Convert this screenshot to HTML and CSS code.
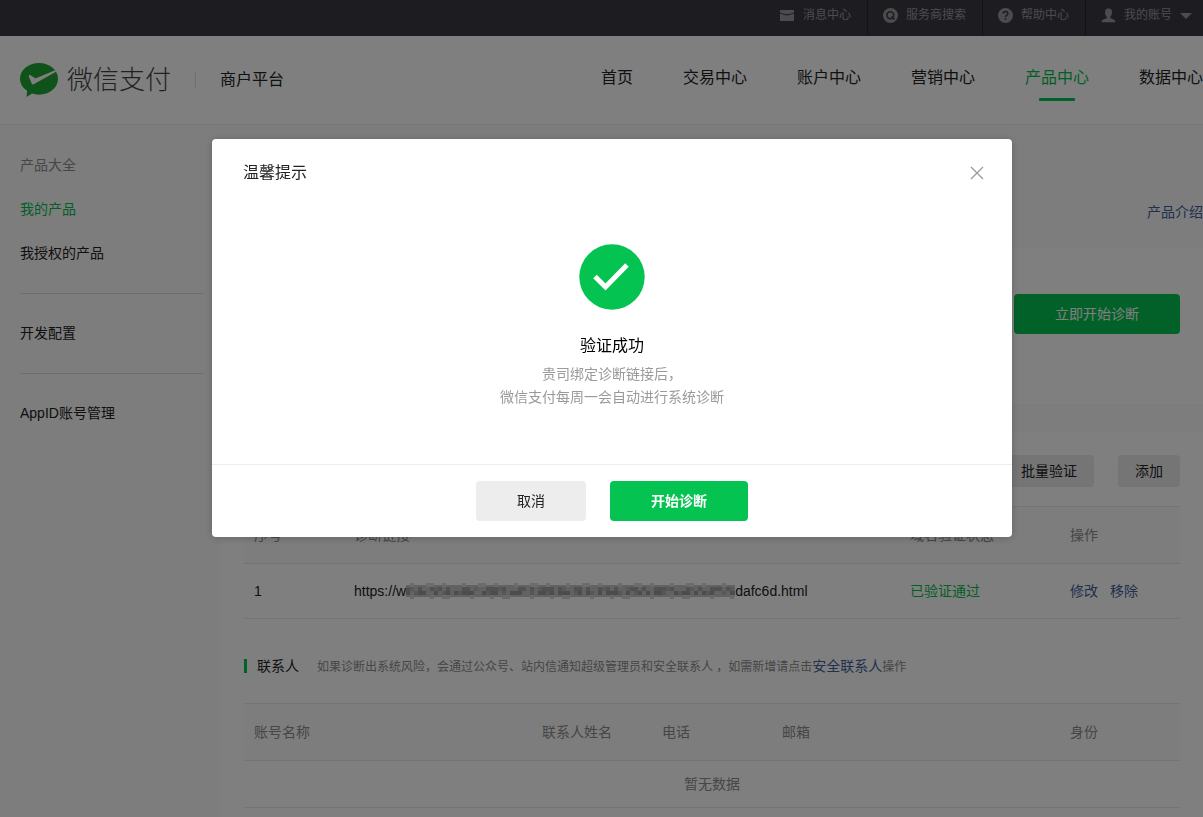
FILE: index.html
```html
<!DOCTYPE html>
<html lang="zh-CN">
<head>
  <meta charset="UTF-8" />
  <meta name="viewport" content="width=device-width, initial-scale=1" />
  <title>微信支付商户平台</title>
  <link rel="stylesheet" href="styles.css">
</head>
<body>
  <div class="topbar">
    <a class="top-item" href="#">
      <svg width="15" height="15" viewBox="0 0 15 15"><path d="M0 2h14v2.400Q7 8 0 4.400z" fill="#98989a"/><path d="M0 5.600Q7 9.200 14 5.600V13H0z" fill="#98989a"/></svg>
      <span>消息中心</span>
    </a>
    <a class="top-item" href="#">
      <svg width="15" height="15" viewBox="0 0 15 15"><circle cx="7.500" cy="7.500" r="7.500" fill="#98989a"/><circle cx="7.300" cy="7.200" r="3.400" fill="none" stroke="#3a3b42" stroke-width="1.600"/><path d="M8.500 8.500l3 3" stroke="#3a3b42" stroke-width="1.600"/></svg>
      <span>服务商搜索</span>
    </a>
    <a class="top-item" href="#">
      <svg width="15" height="15" viewBox="0 0 15 15"><circle cx="7.500" cy="7.500" r="7.500" fill="#98989a"/><path d="M5.200 5.800C5.200 2.600 9.900 2.700 9.900 5.500C9.900 7.200 7.500 7.200 7.500 9.300" fill="none" stroke="#3a3b42" stroke-width="1.500"/><rect x="6.700" y="10.300" width="1.600" height="1.600" fill="#3a3b42"/></svg>
      <span>帮助中心</span>
    </a>
    <a class="top-item" href="#">
      <svg width="15" height="15" viewBox="0 0 15 15"><path d="M7.500 0.500C10 0.500 11 2.200 11 4.400C11 6.600 10 8 9.200 8.800V10C10.500 11 14.500 11 14.500 14.300H0.500C0.500 11 4.500 11 5.800 10V8.800C5 8 4 6.600 4 4.400C4 2.200 5 0.500 7.500 0.500z" fill="#98989a"/></svg>
      <span>我的账号</span>
      <svg class="caret" width="12" height="6" viewBox="0 0 12 6"><path d="M0 0h12L6 6z" fill="#98989a"/></svg>
    </a>
  </div>

  <header class="header">
    <a class="logo" href="#">
      <svg width="38" height="34" viewBox="0 0 38 34"><path d="M19 0C29.500 0 38 7 38 15.800S29.500 31.700 19 31.700C16.500 31.700 14.200 31.300 12.100 30.600L6.600 34L7 27.800C2.700 24.900 0 20.600 0 15.800C0 7 8.500 0 19 0z" fill="#1fa637"/><path d="M9 12.200C9.600 11.800 10 12 10.500 12.300L15.500 15.600L35 7.200L36 8.800L13.700 21.300C12.900 21.700 12.200 21.400 11.800 20.700L8.900 13.800C8.600 13.100 8.600 12.500 9 12.200z" fill="#fff"/></svg>
      <span class="logo-name">微信支付</span>
    </a>
    <span class="platform">商户平台</span>
    <nav class="nav">
      <a href="#">首页</a>
      <a href="#">交易中心</a>
      <a href="#">账户中心</a>
      <a href="#">营销中心</a>
      <a class="active" href="#">产品中心</a>
      <a href="#">数据中心</a>
    </nav>
  </header>

  <div class="container">
    <aside class="sidebar">
      <p class="side-title">产品大全</p>
      <a class="active" href="#">我的产品</a>
      <a href="#">我授权的产品</a>
      <hr>
      <a href="#">开发配置</a>
      <hr>
      <a href="#">AppID账号管理</a>
    </aside>

    <main class="main">
      <div class="main-head"><a href="#">产品介绍</a></div>

      <section class="panel diagnose">
        <button class="btn btn-primary">立即开始诊断</button>
      </section>

      <section class="panel links">
        <div class="toolbar">
          <button class="btn btn-small">批量验证</button>
          <button class="btn btn-small">添加</button>
        </div>
        <table class="table">
          <colgroup><col class="c-no"><col><col class="c-status"><col class="c-op"></colgroup>
          <thead>
            <tr><th>序号</th><th>诊断链接</th><th>域名验证状态</th><th>操作</th></tr>
          </thead>
          <tbody>
            <tr>
              <td>1</td>
              <td>
                <span class="url">https://w<svg class="mosaic" width="329" height="16" viewBox="0 0 329 16">
                  <rect y="2" width="329" height="12" fill="#c4c4c4"/>
                  <g fill="none" stroke-width="4">
                    <path d="M4 2H329" stroke="#d8d8da" stroke-dasharray="4 12 8 8 4 16"/>
                    <path d="M0 6H329" stroke="#a2a2a4" stroke-dasharray="8 4 4 8 12 4 4 12"/>
                    <path d="M4 6H329" stroke="#bab0a6" stroke-dasharray="4 20 4 36"/>
                    <path d="M0 10H329" stroke="#98999c" stroke-dasharray="4 4 12 8 4 4 8 4"/>
                    <path d="M8 10H329" stroke="#a8b0b8" stroke-dasharray="4 24 4 12"/>
                    <path d="M4 14H329" stroke="#d2d2d4" stroke-dasharray="4 16 4 8 8 20"/>
                  </g>
                </svg>dafc6d.html</span>
              </td>
              <td class="ok">已验证通过</td>
              <td><a href="#">修改</a><a href="#">移除</a></td>
            </tr>
          </tbody>
        </table>

        <div class="contact-head">
          <h3>联系人</h3>
          <p>如果诊断出系统风险，会通过公众号、站内信通知超级管理员和安全联系人 ，如需新增请点击<a href="#">安全联系人</a>操作</p>
        </div>
        <table class="table contacts">
          <colgroup><col><col class="c-name"><col class="c-phone"><col class="c-mail"><col class="c-op"></colgroup>
          <thead>
            <tr><th>账号名称</th><th>联系人姓名</th><th>电话</th><th>邮箱</th><th>身份</th></tr>
          </thead>
          <tbody>
            <tr><td class="empty" colspan="5">暂无数据</td></tr>
          </tbody>
        </table>
      </section>
    </main>
  </div>

  <div class="mask">
    <div class="dialog" role="dialog" aria-labelledby="dialogTitle">
      <div class="dialog-head">
        <h2 id="dialogTitle">温馨提示</h2>
        <button class="close" aria-label="关闭">
          <svg width="14" height="14" viewBox="0 0 14 14"><path d="M1 1l12 12M13 1L1 13" stroke="#9a9a9a" stroke-width="1.300"/></svg>
        </button>
      </div>
      <div class="dialog-body">
        <svg width="66" height="66" viewBox="0 0 66 66"><circle cx="33" cy="33" r="32.700" fill="#04c351"/><path d="M16 32.500L26.500 43L48 21" fill="none" stroke="#fff" stroke-width="5"/></svg>
        <h4>验证成功</h4>
        <p>贵司绑定诊断链接后，<br>微信支付每周一会自动进行系统诊断</p>
      </div>
      <div class="dialog-foot">
        <button class="btn btn-default">取消</button>
        <button class="btn btn-primary btn-bold">开始诊断</button>
      </div>
    </div>
  </div>
</body>
</html>
```

FILE: styles.css
```css
* {
  box-sizing: border-box;
}

body {
  margin: 0;
  min-height: 100vh;
  display: flex;
  flex-direction: column;
  overflow: hidden;
  font-family: "Liberation Sans", "Noto Sans CJK SC", sans-serif;
  font-size: 14px;
  line-height: 22px;
  color: #222;
  background: #fafafa;
}

h2, h3, h4, p {
  margin: 0;
  font-weight: normal;
}

a {
  color: #44609d;
  text-decoration: none;
}

svg {
  flex: none;
}

button {
  font: inherit;
  border: 0;
  cursor: pointer;
}

/* top bar */
.topbar {
  display: flex;
  justify-content: flex-end;
  height: 36px;
  background: #3a3b42;
}

.top-item {
  display: flex;
  align-items: center;
  gap: 8px;
  padding: 0 16px 6px 15px;
  border-left: 1px solid #26272c;
  font-size: 12px;
  color: #98989a;
}

.top-item:first-child {
  border-left: 0;
}

.top-item:last-child {
  padding-right: 11px;
}

.caret {
  margin-top: 2px;
}

/* header */
.header {
  display: flex;
  align-items: center;
  height: 89px;
  padding-left: 20px;
  background: #fff;
  border-bottom: 1px solid #ececec;
}

.logo {
  display: flex;
  align-items: center;
  gap: 9px;
}

.logo-name {
  font-size: 26px;
  font-weight: 300;
  line-height: 32px;
  color: #444;
}

.platform {
  margin-left: 24px;
  padding-left: 24px;
  border-left: 1px solid #ddd;
  font-size: 16px;
  line-height: 16px;
}

.nav {
  display: flex;
  gap: 50px;
  margin-left: auto;
}

.nav a {
  position: relative;
  font-size: 16px;
  line-height: 24px;
  padding-bottom: 4px;
  color: #222;
  white-space: nowrap;
}

.nav .active {
  color: #04be4f;
}

.nav .active::after {
  content: "";
  position: absolute;
  left: 50%;
  bottom: -7px;
  width: 36px;
  height: 3px;
  margin-left: -18px;
  border-radius: 1px;
  background: #04c351;
}

/* layout */
.container {
  display: flex;
  flex: 1;
  padding-left: 20px;
}

.sidebar {
  display: flex;
  flex-direction: column;
  width: 184px;
  margin-right: 16px;
  padding-top: 18px;
  line-height: 44px;
}

.sidebar a {
  color: #222;
}

.sidebar .side-title {
  color: #8c8c8c;
}

.sidebar .active {
  color: #04be4f;
}

.sidebar hr {
  width: 100%;
  margin: 18px 0 17px;
  border: 0;
  border-top: 1px solid #dcdcdc;
}

.main {
  display: flex;
  flex-direction: column;
  flex: 1;
}

.main-head {
  display: flex;
  justify-content: flex-end;
  height: 121px;
  padding-top: 76px;
}

.panel {
  padding: 24px 23px 24px 24px;
  background: #fff;
  border: 1px solid #f6f6f6;
  border-width: 1px 0;
}

.diagnose {
  display: flex;
  justify-content: flex-end;
  height: 160px;
  padding-top: 47px;
  margin-bottom: 24px;
}

.links {
  flex: 1;
}

.toolbar {
  display: flex;
  justify-content: flex-end;
  gap: 24px;
  margin-bottom: 19px;
}

/* buttons */
.btn {
  height: 40px;
  padding: 0 41px;
  border-radius: 4px;
  color: #222;
  background: #ededed;
}

.btn-primary {
  color: #fff;
  background: #04c351;
}

.btn-small {
  height: 32px;
  padding: 0 17px;
  background: #ebebeb;
}

.btn-bold {
  font-weight: bold;
}

/* tables */
.table {
  width: 100%;
  table-layout: fixed;
  border-collapse: collapse;
}

.table th,
.table td {
  height: 57px;
  padding: 0 10px;
  border-bottom: 1px solid #e8e8e8;
  font-weight: normal;
  text-align: left;
}

.table th {
  color: #8c8c8c;
  background: #fafafa;
  border-top: 1px solid #e8e8e8;
}

.table td {
  height: 55px;
}

.table td a + a {
  margin-left: 12px;
}

.table .ok {
  color: #04be4f;
}

.c-no { width: 100px; }
.c-status { width: 160px; }
.c-op { width: 120px; }
.c-name { width: 120px; }
.c-phone { width: 120px; }
.c-mail { width: 288px; }

.url {
  display: flex;
  align-items: center;
}

.contacts .empty {
  height: 47px;
  text-align: center;
  color: #8c8c8c;
}

.contact-head {
  display: flex;
  align-items: center;
  gap: 18px;
  height: 84px;
  padding-top: 10px;
}

.contact-head h3 {
  padding-left: 10px;
  border-left: 3px solid #04c351;
  font-size: 14px;
  line-height: 14px;
}

.contact-head p {
  font-size: 12px;
  color: #8c8c8c;
}

.contact-head a {
  font-size: 14px;
}

/* dialog */
.mask {
  position: fixed;
  inset: 0;
  display: flex;
  justify-content: center;
  align-items: flex-start;
  padding: 139px 0 0 21px;
  background: rgba(0, 0, 0, 0.5);
}

.dialog {
  width: 800px;
  border-radius: 4px;
  background: #fff;
  box-shadow: 0 1px 8px rgba(0, 0, 0, 0.2);
}

.dialog-head {
  display: flex;
  justify-content: space-between;
  align-items: center;
  height: 68px;
  padding: 0 28px 0 31px;
}

.dialog-head h2 {
  font-size: 16px;
}

.close {
  display: flex;
  padding: 0;
  background: none;
}

.dialog-body {
  display: flex;
  flex-direction: column;
  align-items: center;
  height: 257px;
  padding-top: 37px;
}

.dialog-body h4 {
  margin: 24px 0 6px;
  font-size: 16px;
  line-height: 23px;
  color: #000;
}

.dialog-body p {
  line-height: 23px;
  text-align: center;
  color: #9a9a9a;
}

.dialog-foot {
  display: flex;
  justify-content: center;
  gap: 24px;
  padding: 16px 0;
  border-top: 1px solid #ededed;
}
```
